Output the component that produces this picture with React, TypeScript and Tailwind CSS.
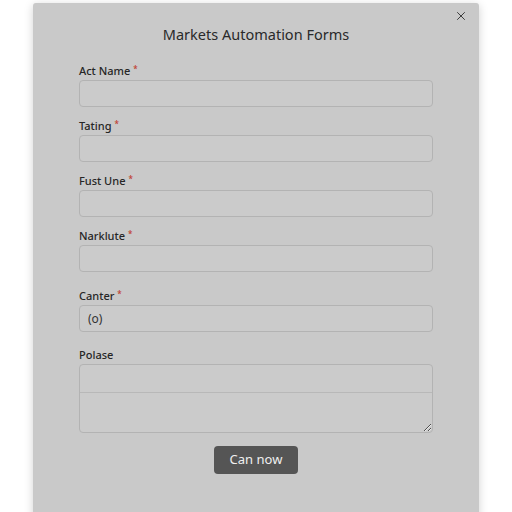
import { X } from "lucide-react";

const FIELDS = [
  { label: "Act Name", required: true, value: "" },
  { label: "Tating", required: true, value: "" },
  { label: "Fust Une", required: true, value: "" },
  { label: "Narklute", required: true, value: "" },
];

function Label({ text, required }: { text: string; required?: boolean }) {
  return (
    <label className="block h-[14px] mb-[2px] text-[11px] leading-[14px] font-medium text-[#262626]">
      {text}
      {required && <span className="ml-[3px] align-top text-[8px] leading-[10px] text-[#c0392b]">*</span>}
    </label>
  );
}

function Field({ label, required, value }: { label: string; required?: boolean; value?: string }) {
  return (
    <div>
      <Label text={label} required={required} />
      <input
        type="text"
        defaultValue={value}
        className="block w-full h-[27px] rounded-[4px] border border-[#b3b3b3] bg-[#cbcbcb] px-[8px] text-[12px] text-[#333] outline-none"
      />
    </div>
  );
}

export default function App() {
  return (
    <div
      className="w-[512px] h-[512px] overflow-hidden bg-white pt-[3px] px-[33px]"
      style={{ fontFamily: '"Noto Sans", "Open Sans", sans-serif' }}
    >
      <div className="relative h-[520px] rounded-[3px] bg-[#c9c9c9] px-[46px] shadow-[0_2px_10px_rgba(0,0,0,0.18)]">
        <button className="absolute right-[8px] top-[3px] flex size-[20px] items-center justify-center text-[#333]" aria-label="Close">
          <X className="size-[14px]" strokeWidth={1.6} />
        </button>

        <h1 className="pt-[21px] h-[41px] text-center text-[14.5px] leading-[20px] text-[#2a2a2a]">
          Markets Automation Forms
        </h1>

        <div className="mt-[20px] flex flex-col gap-[12px]">
          {FIELDS.map((f) => (
            <Field key={f.label} label={f.label} required={f.required} value={f.value} />
          ))}
        </div>

        <div className="mt-[17px]">
          <Field label="Canter" required value="(o)" />
        </div>

        <div className="mt-[16px]">
          <Label text="Polase" />
          <div className="flex h-[69px] flex-col overflow-hidden rounded-[4px] border border-[#b3b3b3] bg-[#cbcbcb]">
            <div className="h-[28px] shrink-0 border-b border-[#b8b8b8]" />
            <textarea className="block w-full flex-1 resize-y bg-transparent outline-none" />
          </div>
        </div>

        <div className="mt-[13px] flex justify-center">
          <button className="h-[28px] w-[84px] rounded-[4px] bg-[#555555] text-[13px] text-[#f0f0f0]">
            Can now
          </button>
        </div>
      </div>
    </div>
  );
}
